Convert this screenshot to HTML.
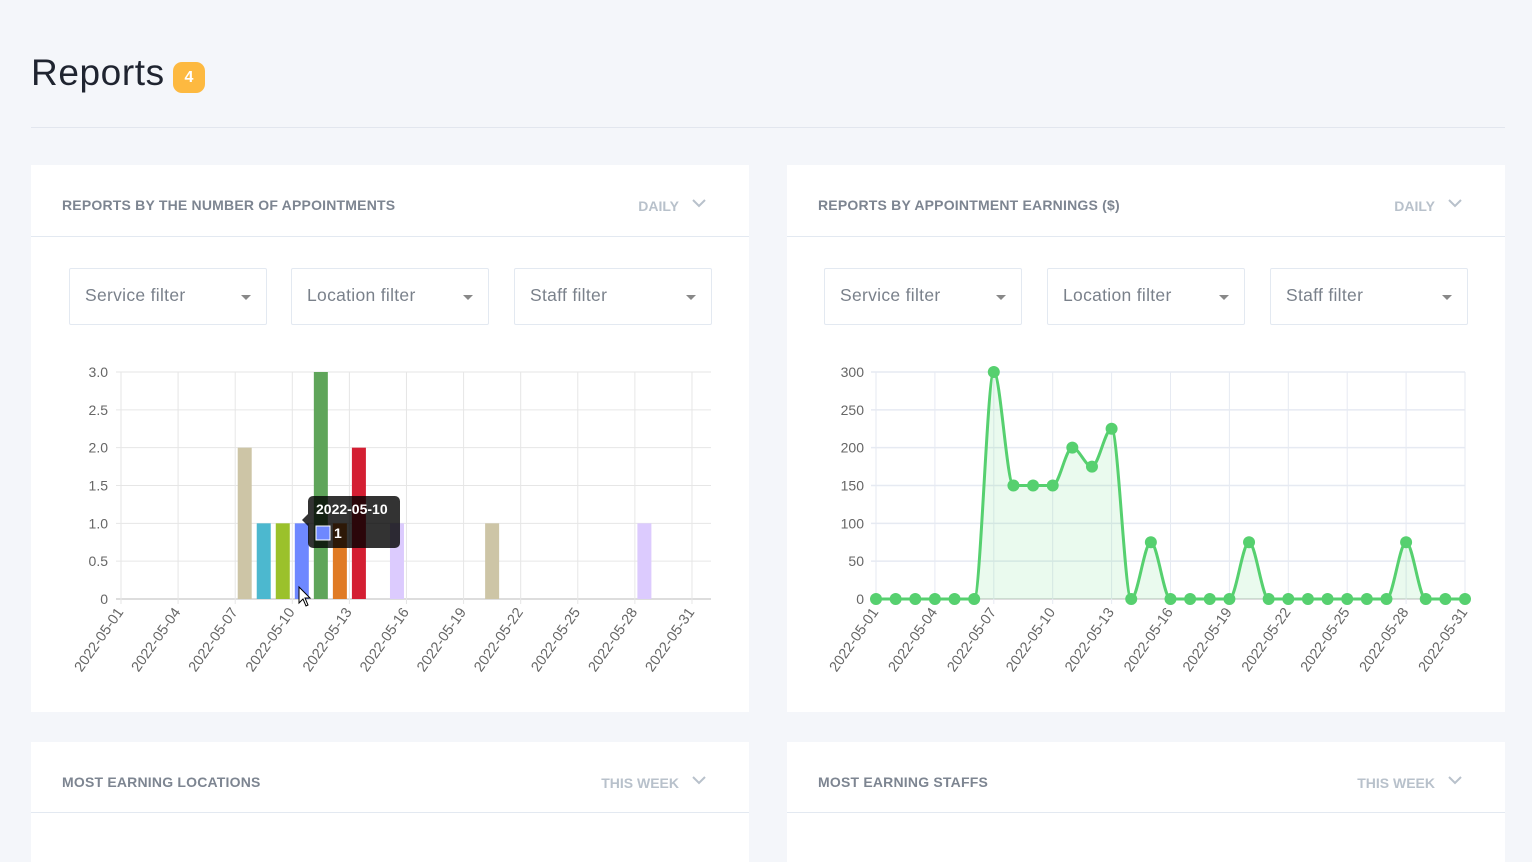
<!DOCTYPE html>
<html><head><meta charset="utf-8"><style>
*{box-sizing:border-box;margin:0;padding:0}
body{width:1532px;height:840px;overflow:hidden;background:#f4f6fa;font-family:"Liberation Sans",sans-serif;position:relative}
.title{position:absolute;left:31px;top:52px;font-size:37px;color:#1f2430;letter-spacing:0.6px}
.badge{position:absolute;left:173px;top:62px;width:32px;height:31px;border-radius:9px;background:#fdb940;color:#fff;font-size:16px;font-weight:bold;text-align:center;line-height:31px}
.hr{position:absolute;left:31px;top:127px;width:1474px;height:1px;background:#e2e6ee}
.card{position:absolute;background:#fff;width:718px}
.hd{height:72px;border-bottom:1px solid #e3e9f1;position:relative}
.hd .t{position:absolute;left:31px;top:32px;font-size:14px;font-weight:bold;color:#7d8591;letter-spacing:0.2px}
.hd .r{position:absolute;right:70px;top:33px;font-size:14px;font-weight:bold;color:#b8c1cb}
.hd svg{position:absolute;right:43px;top:34px}
.f{position:absolute;top:103px;width:198px;height:57px;border:1px solid #e3e9f1;border-radius:2px;font-size:17.5px;color:#7a818b;padding:16px 0 0 15px;letter-spacing:0.3px}
.f:after{content:"";position:absolute;right:15px;top:26px;border-left:5px solid transparent;border-right:5px solid transparent;border-top:5px solid #888}
svg text{font-family:"Liberation Sans",sans-serif}
</style></head><body>
<div class="title">Reports</div><div class="badge">4</div>
<div class="hr"></div>

<div class="card" style="left:31px;top:165px;height:547px">
 <div class="hd"><div class="t">REPORTS BY THE NUMBER OF APPOINTMENTS</div><div class="r">DAILY</div><svg width="14" height="9"><path d="M1 1L7 7L13 1" stroke="#b8c1cb" stroke-width="2" fill="none"/></svg></div>
 <div class="f" style="left:38px">Service filter</div><div class="f" style="left:260px">Location filter</div><div class="f" style="left:483px">Staff filter</div>
</div>
<div class="card" style="left:787px;top:165px;height:547px">
 <div class="hd"><div class="t">REPORTS BY APPOINTMENT EARNINGS ($)</div><div class="r">DAILY</div><svg width="14" height="9"><path d="M1 1L7 7L13 1" stroke="#b8c1cb" stroke-width="2" fill="none"/></svg></div>
 <div class="f" style="left:37px">Service filter</div><div class="f" style="left:260px">Location filter</div><div class="f" style="left:483px">Staff filter</div>
</div>
<div class="card" style="left:31px;top:742px;height:120px">
 <div class="hd" style="height:71px"><div class="t">MOST EARNING LOCATIONS</div><div class="r">THIS WEEK</div><svg width="14" height="9"><path d="M1 1L7 7L13 1" stroke="#b8c1cb" stroke-width="2" fill="none"/></svg></div>
</div>
<div class="card" style="left:787px;top:742px;height:120px">
 <div class="hd" style="height:71px"><div class="t">MOST EARNING STAFFS</div><div class="r">THIS WEEK</div><svg width="14" height="9"><path d="M1 1L7 7L13 1" stroke="#b8c1cb" stroke-width="2" fill="none"/></svg></div>
</div>

<svg id="c" width="1532" height="840" style="position:absolute;left:0;top:0"></svg>
<script>
var s='';
function days(d){return '2022-05-'+(d<10?'0':'')+d;}
var L=121,R=711,T=372,B=599,cw=(R-L)/31;
[0,.5,1,1.5,2,2.5,3].forEach(function(v){var y=B-(B-T)*v/3;s+='<line x1="'+(L-5)+'" x2="'+R+'" y1="'+y+'" y2="'+y+'" stroke="'+(v==0?'#bbb':'#e6e6e6')+'"/>';s+='<text x="108" y="'+(y+5)+'" text-anchor="end" font-size="14" fill="#666">'+(v==0?'0':v.toFixed(1))+'</text>';});
for(var d=1;d<=31;d+=3){var x=L+cw*(d-1);s+='<line x1="'+x+'" x2="'+x+'" y1="'+T+'" y2="'+(B+5)+'" stroke="#e6e6e6"/>';s+='<text transform="translate('+(x+3)+',612) rotate(-55)" text-anchor="end" font-size="14.5" fill="#666">'+days(d)+'</text>';}
var bars=[[7,2,'#cdc5a6'],[8,1,'#4cb8cf'],[9,1,'#9bc12b'],[10,1,'#6e88ff'],[11,3,'#5fa55a'],[12,1,'#e07b25'],[13,2,'#d41f33'],[15,1,'#dccbfe'],[20,1,'#cdc5a6'],[28,1,'#dccbfe']];
bars.forEach(function(b){var cx=L+cw*(b[0]-.5),h=(B-T)*b[1]/3;s+='<rect x="'+(cx-7)+'" y="'+(B-h)+'" width="14" height="'+h+'" fill="'+b[2]+'"/>';});
s+='<rect x="308" y="496" width="92" height="52" rx="5" fill="rgba(0,0,0,0.8)"/><path d="M308 514L302 520L308 526Z" fill="rgba(0,0,0,0.8)"/>';
s+='<text x="316" y="514" font-size="14" font-weight="bold" fill="#fff">2022-05-10</text><rect x="316" y="526" width="14" height="14" fill="#6e88ff" stroke="#fff" stroke-width="1"/><text x="334" y="538" font-size="14" font-weight="bold" fill="#fff">1</text>';
s+='<path d="M299 587L299 603L303 599L306 606L308 605L305 598L310 598Z" fill="#fff" stroke="#000" stroke-width="1"/>';
var L2=876,R2=1465,st=(R2-L2)/30;
[0,50,100,150,200,250,300].forEach(function(v){var y=B-(B-T)*v/300;s+='<line x1="'+(L2-5)+'" x2="'+R2+'" y1="'+y+'" y2="'+y+'" stroke="'+(v==0?'#bbb':'#e6eaf2')+'" stroke-width="'+(v==0?1:1.5)+'"/>';s+='<text x="864" y="'+(y+5)+'" text-anchor="end" font-size="14" fill="#666">'+v+'</text>';});
for(var d=1;d<=31;d+=3){var x=L2+st*(d-1);s+='<line x1="'+x+'" x2="'+x+'" y1="'+T+'" y2="'+(B+5)+'" stroke="#e6eaf2"/>';s+='<text transform="translate('+(x+3)+',612) rotate(-55)" text-anchor="end" font-size="14.5" fill="#666">'+days(d)+'</text>';}
var v=[0,0,0,0,0,0,300,150,150,150,200,175,225,0,75,0,0,0,0,75,0,0,0,0,0,0,0,75,0,0,0];
var P=v.map(function(a,i){return [L2+st*i,B-(B-T)*a/300];});
var n=P.length,dl=[],m=[];
for(var i=0;i<n-1;i++)dl.push((P[i+1][1]-P[i][1])/st);
for(var i=0;i<n;i++){if(i==0)m.push(dl[0]);else if(i==n-1)m.push(dl[n-2]);else if(dl[i-1]*dl[i]<=0)m.push(0);else m.push((dl[i-1]+dl[i])/2);}
for(var i=0;i<n-1;i++){if(dl[i]==0){m[i]=0;m[i+1]=0;continue;}var a=m[i]/dl[i],b=m[i+1]/dl[i],h=a*a+b*b;if(h>9){var t=3/Math.sqrt(h);m[i]=t*a*dl[i];m[i+1]=t*b*dl[i];}}
var p='M'+P[0][0]+' '+P[0][1];
for(var i=0;i<n-1;i++){var dx=st/3;p+=' C'+(P[i][0]+dx)+' '+(P[i][1]+m[i]*dx)+' '+(P[i+1][0]-dx)+' '+(P[i+1][1]-m[i+1]*dx)+' '+P[i+1][0]+' '+P[i+1][1];}
s+='<path d="'+p+' L'+R2+' '+B+' L'+L2+' '+B+'Z" fill="rgba(84,214,114,0.12)"/>';
s+='<path d="'+p+'" fill="none" stroke="#56d06f" stroke-width="3"/>';
P.forEach(function(q){s+='<circle cx="'+q[0]+'" cy="'+q[1]+'" r="6" fill="#56d06f"/>';});
document.getElementById('c').innerHTML=s;
</script>
</body></html>
